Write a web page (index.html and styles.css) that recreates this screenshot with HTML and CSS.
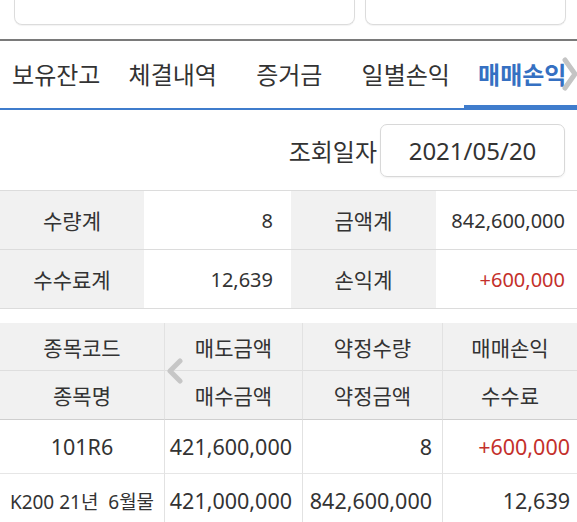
FILE: index.html
```html
<!DOCTYPE html>
<html lang="ko">
<head>
<meta charset="utf-8">
<title>매매손익</title>
<link rel="stylesheet" href="styles.css">
</head>
<body>
<div class="top-cards">
  <div class="card card-left"></div>
  <div class="card card-right"></div>
</div>
<div class="divider"></div>
<div class="tabs">
  <div class="tab">보유잔고</div>
  <div class="tab">체결내역</div>
  <div class="tab">증거금</div>
  <div class="tab">일별손익</div>
  <div class="tab active">매매손익</div>
  <svg class="tab-arrow" width="16" height="36" viewBox="0 0 16 36"><polyline points="3,4 13,18 3,32" fill="none" stroke="#c4c4c4" stroke-width="5" stroke-linecap="round" stroke-linejoin="round"/></svg>
</div>
<div class="date-row">
  <span class="date-label">조회일자</span>
  <div class="date-box">2021/05/20</div>
</div>
<div class="summary">
  <div class="s-label">수량계</div>
  <div class="s-value">8</div>
  <div class="s-label">금액계</div>
  <div class="s-value s-last">842,600,000</div>
  <div class="s-label">수수료계</div>
  <div class="s-value">12,639</div>
  <div class="s-label">손익계</div>
  <div class="s-value s-last red">+600,000</div>
</div>
<div class="grid">
  <div class="h h1">종목코드</div>
  <div class="h h1">매도금액</div>
  <div class="h h1">약정수량</div>
  <div class="h h1 hl">매매손익</div>
  <div class="h h2">종목명</div>
  <div class="h h2">매수금액</div>
  <div class="h h2">약정금액</div>
  <div class="h h2 hl">수수료</div>
  <div class="d center">101R6</div>
  <div class="d">421,600,000</div>
  <div class="d">8</div>
  <div class="d dl red">+600,000</div>
  <div class="d center small">K200 21년&nbsp; 6월물</div>
  <div class="d">421,000,000</div>
  <div class="d">842,600,000</div>
  <div class="d dl">12,639</div>
  <svg class="grid-arrow" width="18" height="26" viewBox="0 0 18 26"><polyline points="14,3 4,13 14,23" fill="none" stroke="#c6c6c6" stroke-width="5" stroke-linecap="round" stroke-linejoin="round"/></svg>
</div>
</body>
</html>
```
FILE: styles.css
```css
* { box-sizing: border-box; }
html, body { margin: 0; padding: 0; background: #fff; }
body {
  font-family: "Noto Sans", "Noto Sans CJK KR", sans-serif;
  color: #333;
  width: 577px;
  overflow: hidden;
}
.top-cards {
  display: flex;
  gap: 10px;
  padding: 0 11px 0 14px;
  height: 39px;
}
.card {
  height: 25px;
  border: 1px solid #dcdcdc;
  border-top: none;
  border-radius: 0 0 8px 8px;
  box-shadow: 0 1px 1px rgba(0,0,0,0.05);
}
.card-left { width: 341px; }
.card-right { flex: 1; }
.divider {
  height: 2px;
  background: #7a7a7a;
}
.tabs {
  position: relative;
  display: flex;
  height: 69px;
  border-bottom: 2px solid #3f7ccc;
  overflow: hidden;
}
.tab {
  flex: 0 0 116.5px;
  display: flex;
  align-items: center;
  justify-content: center;
  font-size: 24px;
  color: #333;
  white-space: nowrap;
  padding-bottom: 2px;
}
.tab:first-child { margin-left: -2px; }
.tab.active {
  color: #3570c2;
  font-weight: bold;
  box-shadow: inset 0 -3px 0 #3f7ccc;
}
.tab-arrow {
  position: absolute;
  right: -1px;
  top: 15px;
}
.date-row {
  display: flex;
  justify-content: flex-end;
  align-items: center;
  gap: 3px;
  padding: 14px 12px 13px 0;
}
.date-label { font-size: 24px; }
.date-box {
  width: 185px;
  height: 53px;
  border: 1px solid #d8d8d8;
  border-radius: 7px;
  display: flex;
  align-items: center;
  justify-content: center;
  font-size: 24px;
  box-shadow: 0 1px 2px rgba(0,0,0,0.06);
}
.summary {
  display: grid;
  grid-template-columns: 144px 147px 145px 1fr;
  border-top: 1px solid #dcdcdc;
}
.summary > div {
  height: 59px;
  border-bottom: 1px solid #dcdcdc;
  display: flex;
  align-items: center;
  font-size: 21px;
}
.s-label {
  background: #f1f1f1;
  justify-content: center;
}
.s-value {
  justify-content: flex-end;
  padding-right: 18px;
  font-size: 20px !important;
}
.s-value.s-last { padding-right: 12px; }
.red { color: #c4302b; }
.grid {
  position: relative;
  margin-top: 14px;
  display: grid;
  grid-template-columns: 165px 138px 140px 1fr;
}
.grid > div {
  display: flex;
  align-items: center;
  white-space: nowrap;
  border-right: 1px solid #e2e2e2;
}
.grid > div.hl, .grid > div.dl { border-right: none; }
.h {
  background: #f1f1f1;
  justify-content: center;
  font-size: 21px;
}
.h1 { height: 48px; border-bottom: 1px solid #dedede; }
.h2 { height: 49px; border-bottom: 1px solid #cfcfcf; }
.d {
  height: 54px;
  justify-content: flex-end;
  padding-right: 10px;
  font-size: 21.5px;
  border-bottom: 1px solid #e6e6e6;
}
.d.dl { padding-right: 7px; }
.d.center { justify-content: center; padding-right: 0; }
.d.small { font-size: 19px; }
.grid-arrow {
  position: absolute;
  left: 166px;
  top: 35px;
}
```
